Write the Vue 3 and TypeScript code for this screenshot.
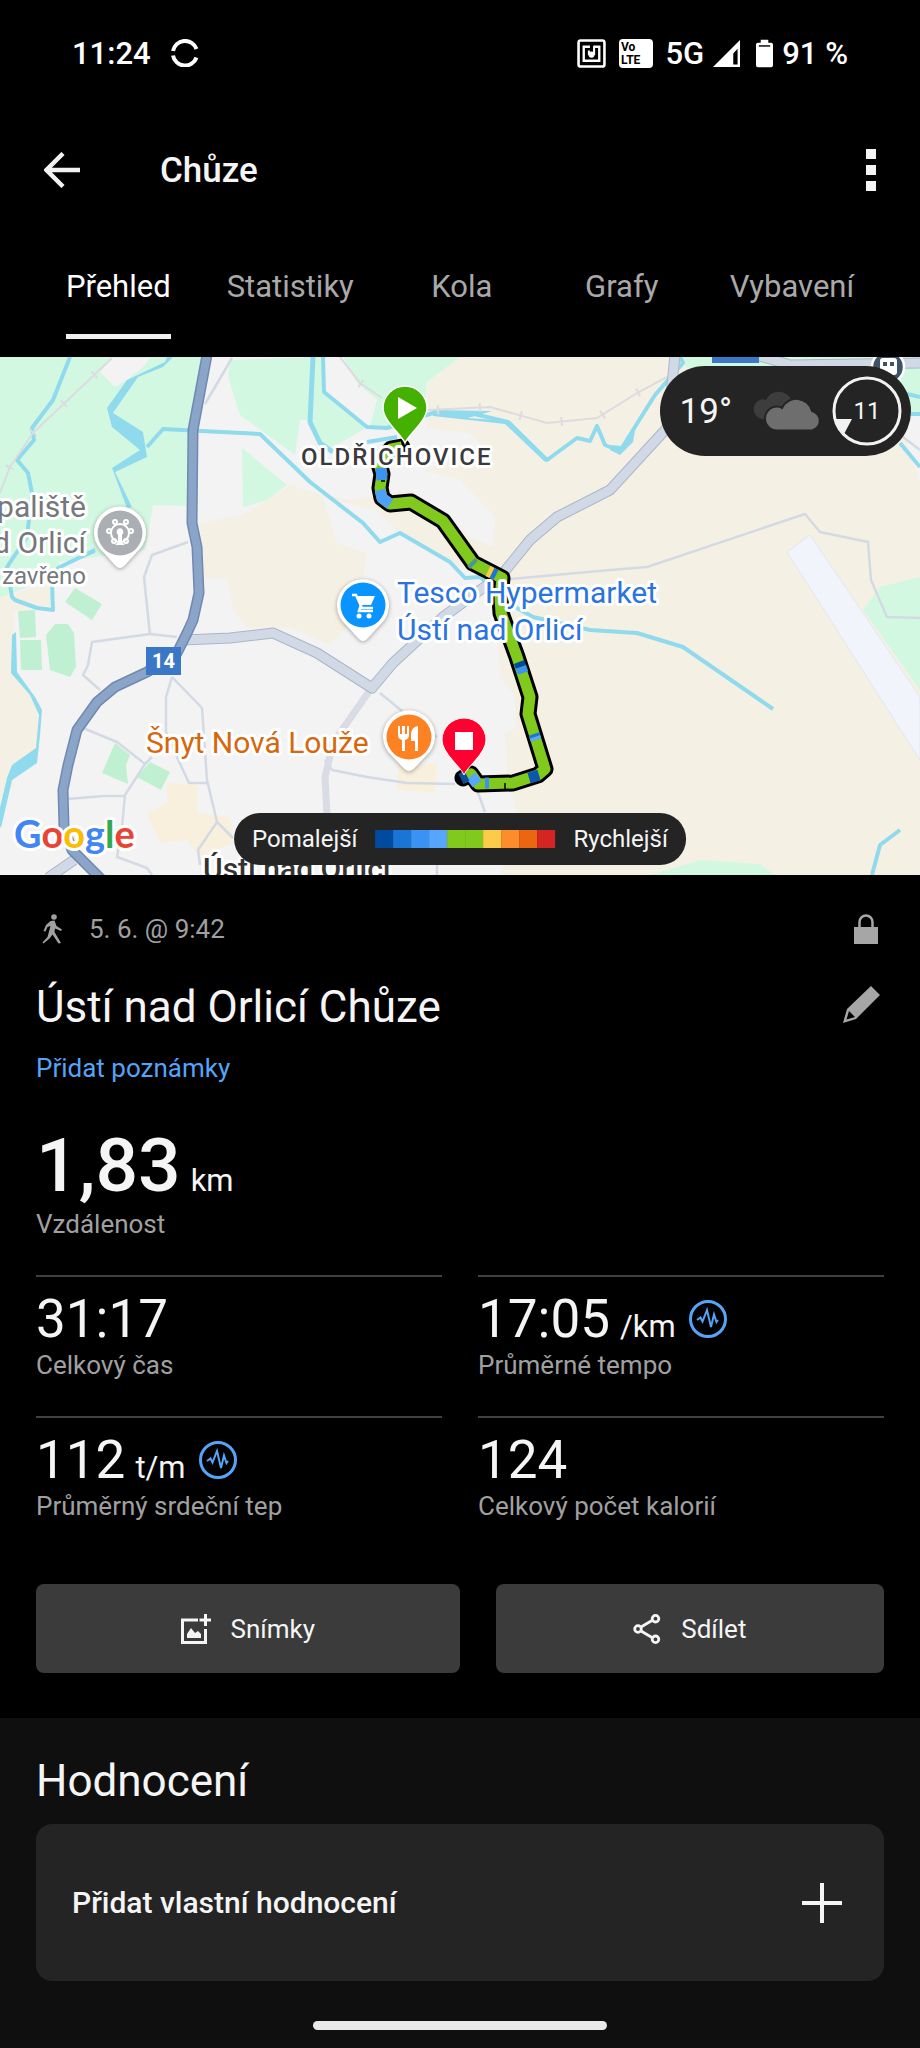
<script setup lang="ts">
import { ref } from 'vue'

interface Metric {
  value: string
  unit?: string
  label: string
  pulse?: boolean
}

interface Segment {
  points: string
  color: string
}

const tabs: string[] = ['Přehled', 'Statistiky', 'Kola', 'Grafy', 'Vybavení']
const activeTab = ref<string>('Přehled')

const metrics: Metric[] = [
  { value: '31:17', label: 'Celkový čas' },
  { value: '17:05', unit: '/km', label: 'Průměrné tempo', pulse: true },
  { value: '112', unit: 't/m', label: 'Průměrný srdeční tep', pulse: true },
  { value: '124', label: 'Celkový počet kalorií' },
]

const paceColors: string[] = [
  '#004a9f', '#1b75d6', '#3a92f2', '#56a6ff', '#82c91e',
  '#82c91e', '#fccb4a', '#fd8c2a', '#ea6610', '#d42424',
]

const track =
  '402,447 391,449 379,464 382,474 380,488 382,498 390,504 411,502 443,521 473,563 502,578 500,597 501,613 517,657 530,697 528,714 545,769 538,775 513,783 478,784 471,774 463,778'

const segments: Segment[] = [
  { points: '381,468 382,480', color: '#3a92f2' },
  { points: '380,490 382,498 390,504', color: '#4d9ff8' },
  { points: '471,562 474,565', color: '#4a9a8c' },
  { points: '488,571 492,573', color: '#fccb4a' },
  { points: '492,573 496,575', color: '#1b75d6' },
  { points: '519,662 521,667', color: '#004a9f' },
  { points: '521,667 523,673', color: '#3a92f2' },
  { points: '534,734 535,737', color: '#1b75d6' },
  { points: '535,737 536,740', color: '#56a6ff' },
  { points: '539,775 529,778', color: '#0d56ad' },
  { points: '489,783 485,783', color: '#3a92f2' },
  { points: '477,784 471,776', color: '#56a6ff' },
  { points: '467,776 461,779', color: '#0b4d97' },
]
</script>

<template>
  <div class="screen">
    <header class="status">
      <div class="status-group">
        <span>11:24</span>
        <svg class="sync" viewBox="0 0 28 28" aria-hidden="true">
          <path d="M2 12a12.2 12.2 0 0 1 23.5-2M2 16.500a12.200 12.200 0 0 0 23.500 2" fill="none" stroke="#fff" stroke-width="4" />
        </svg>
      </div>
      <div class="status-group right">
        <svg class="nfc" viewBox="0 0 28 28" aria-hidden="true">
          <rect x="1.500" y="1.500" width="25" height="25" rx="2" fill="none" stroke="#fff" stroke-width="2.500" />
          <path d="M12.500 7.500H6.500V21H21.500V7.500H16.500" fill="none" stroke="#fff" stroke-width="2.300" />
          <path d="M16.500 6.500V15.500M11.500 11V15.500" fill="none" stroke="#fff" stroke-width="2" />
          <circle cx="14" cy="15" r="3" fill="#fff" />
        </svg>
        <svg class="volte" viewBox="0 0 34 29" aria-hidden="true">
          <rect width="34" height="29" rx="4" fill="#fff" />
          <text x="2" y="12" font-size="12" font-weight="700" fill="#000">Vo</text>
          <text x="2" y="25" font-size="12" font-weight="700" fill="#000">LTE</text>
        </svg>
        <span class="net">5G</span>
        <svg class="signal" viewBox="0 0 28 28" aria-hidden="true">
          <path d="M28 0V28H0ZM25.500 9L21 14V25.500H25.500Z" fill="#fff" fill-rule="evenodd" />
        </svg>
        <svg class="battery" viewBox="0 0 18 29" aria-hidden="true">
          <path d="M5 0h8v3h3q2 0 2 2v22q0 2-2 2H2q-2 0-2-2V5q0-2 2-2h3z" fill="#fff" />
          <path d="M3 6.500h12" stroke="#000" stroke-width="1.500" />
        </svg>
        <span>91 %</span>
      </div>
    </header>

    <div class="appbar">
      <button class="icon-btn" type="button" aria-label="Zpět">
        <svg class="back" viewBox="0 0 36 36" aria-hidden="true">
          <path d="M36 18H3M19 1.500L2.500 18L19 34.500" fill="none" stroke="#f2f2f2" stroke-width="4.500" />
        </svg>
      </button>
      <h1>Chůze</h1>
      <button class="icon-btn kebab" type="button" aria-label="Další možnosti">
        <i /><i /><i />
      </button>
    </div>

    <nav class="tabs">
      <button
        v-for="tab in tabs"
        :key="tab"
        type="button"
        :class="{ active: tab === activeTab }"
        @click="activeTab = tab"
      >
        <span>{{ tab }}</span>
      </button>
    </nav>

    <section class="map">
      <svg class="canvas" viewBox="0 357 920 518" role="img" aria-label="Mapa trasy">
        <rect y="357" width="920" height="518" fill="#f3f3f3" />

        <g fill="#f5f0e4">
          <path d="M460 357H920V875H500L517 815L507 770L505 733L517 727L513 693L500 677L497 630V590L455 575L400 548L380 545L337 543L323 497L390 470L427 430V382Z" />
          <path d="M200 523L243 515L267 500L290 485L323 495L337 543L367 553L367 605L330 645L290 628H248L233 610L227 578H204Z" />
          <path d="M0 598L50 583L52 605L14 611V673L33 697L40 723L35 757L12 773L15 785L0 800Z" />
        </g>
        <g fill="#f3f3f3">
          <path d="M390 427H417L470 433L483 447L470 455L423 470L460 480L495 517L493 547L470 537L440 510L410 490L350 500L325 495L300 455L375 440Z" />
          <path d="M323 497L375 510L400 533L455 565L497 585L497 640L360 600L367 553L337 543Z" />
          <path d="M903 430L912 417L920 414V483Z" />
        </g>
        <g fill="#d3f8e2">
          <path d="M0 357H205L192 425L189 506L153 505L145 550L60 562L50 580L25 588L0 598Z" />
          <path d="M230 360L325 357V392L368 427L333 447L320 445L308 420L300 420L295 455L240 415L228 377Z" />
          <path d="M343 357H460L427 382L425 405L390 430L370 425L377 400L357 383Z" />
          <path d="M242 448L287 485L267 500L243 507Z" />
          <path d="M680 357H920V414L860 400L760 372H690Z" />
          <path d="M863 610L880 587L920 577V690Z" />
          <path d="M650 875L700 860L760 864L775 875Z" />
        </g>
        <path d="M100 372L112 358H150L143 367L130 378L115 387Z" fill="#f3f3f3" />
        <path d="M323 357H343L357 383L377 400L370 425L352 412L324 392Z" fill="#f3f3f3" />
        <g fill="#bff0d2">
          <path d="M75 588L102 604L92 620L65 602Z" />
          <path d="M18 611L35 610L36 637L20 638Z" />
          <path d="M20 640H41L42 670H21Z" />
          <path d="M55 624H68L74 633L76 667L70 677L50 670L46 635Z" />
          <path d="M115 743L130 755L126 765L128 784L102 773Z" />
          <path d="M150 762L170 772L161 790L137 777Z" />
        </g>
        <g fill="#f8f0dc">
          <path d="M167 783L197 785V813L230 817L233 843L200 857L187 840L160 843L147 813L167 803Z" />
          <path d="M398 767L437 763L435 793L397 790Z" />
        </g>
        <path d="M787 552L810 535L920 697V760Z" fill="#f2f4fc" stroke="#e4e6ee" />

        <!-- water -->
        <g fill="none" stroke="#90daee" stroke-width="4" stroke-linejoin="round">
          <path d="M70 357L53 400L32 428L34 440L17 460L28 473L32 493L27 537L7 567L12 597L15 600L37 608L53 610L52 583L58 568L95 550" />
          <path d="M147 447L163 429L260 434L310 482L363 523L380 542L400 533L450 562L465 578L480 577L517 608L533 617L590 630L637 633L683 647L773 709" />
          <path d="M313 357L310 422L320 443L333 452" stroke-width="5" />
          <path d="M323 357L324 392L367 427L387 428L433 413H470L508 422L547 460L577 438L590 441L597 426L605 445L620 451L633 430L655 395L683 363L680 357" />
          <path d="M367 442L397 437" />
          <path d="M903 393L920 397M905 414H920M900 443L920 467" />
          <path d="M872 875L880 845L900 830" />
        </g>
        <g fill="#90daee">
          <path d="M173 357L163 367L138 377L113 413L143 432L147 457L115 472L132 507L127 508L112 468L140 450L112 427L107 408L127 380L165 362L167 357Z" />
          <path d="M12 635L16 632L17 672L35 697L42 710L40 735L37 763L12 780L1 828L-3 820L7 778L12 765L36 748L39 715L30 695L11 673Z" />
          <path d="M433 410L492 411L468 418L510 421L545 456V462L505 424L433 416Z" />
          <path d="M610 445L622 446L636 425L633 442L620 455L610 450Z" />
          <path d="M58 568L95 548V553L70 563Z" />
        </g>

        <!-- railway -->
        <g fill="none" stroke="#dcdce0">
          <g stroke-width="2">
            <path d="M112 358L33 433L10 467L0 493" />
            <path d="M340 357L360 383L382 398" />
            <path d="M428 410L490 407L547 423L597 418L637 393L667 377" />
          </g>
          <g stroke-width="9" stroke-dasharray="2 40">
            <path d="M95 374L33 433L10 467L0 493" />
            <path d="M360 383L382 398" />
            <path d="M437 410L490 407L547 423L597 418L637 393L667 377" />
          </g>
        </g>

        <!-- minor roads -->
        <g fill="none" stroke="#d3dae4" stroke-width="2.500" stroke-linejoin="round">
          <path d="M232 358L205 404" />
          <path d="M188 542L152 555L144 577L150 635" />
          <path d="M177 637L150 634L92 642L88 665L83 675L100 690" />
          <path d="M172 677L166 697V732L177 757L189 783H207" />
          <path d="M172 677L202 708L207 780L217 822L233 838M217 822L198 850L200 865" />
          <path d="M83 728L117 742L145 764L152 757M145 764L125 795L122 827L117 857L147 868L152 875" />
          <path d="M68 799L103 796H125" />
          <path d="M380 693L413 720L437 737" />
          <path d="M325 760L332 770L367 777L407 783L455 784M477 790L485 812M437 864V875" />
          <path d="M500 580L610 570L647 567L805 514L820 532L868 542L871 580L887 617L920 618" />
          <path d="M903 437L920 450" />
        </g>
        <path d="M370 690L333 743L325 777L327 815" fill="none" stroke="#d9dce5" stroke-width="7" />

        <!-- main roads -->
        <g fill="none" stroke-linejoin="round">
          <g stroke="#aab7c7" stroke-width="11">
            <path d="M675 355L672 385L667 428L610 490L557 517L530 540L500 577L480 590L443 617L393 663L372 688L317 653L273 633L230 638L183 640" />
            <path d="M760 356L790 365L920 363M74 860L48 878" />
          </g>
          <g stroke="#d0d9e5" stroke-width="9">
            <path d="M675 355L672 385L667 428L610 490L557 517L530 540L500 577L480 590L443 617L393 663L372 688L317 653L273 633L230 638L183 640" />
            <path d="M760 356L790 365L920 363M74 860L48 878" />
          </g>
          <path d="M207 355L193 430L192 523L197 547L199 593L193 620L187 633L177 653L147 672L115 687L97 702L77 730L68 765L63 790L64 827L72 850L102 880" stroke="#7189b0" stroke-width="11" />
          <path d="M207 355L193 430L192 523L197 547L199 593L193 620L187 633L177 653L147 672L115 687L97 702L77 730L68 765L63 790L64 827L72 850L102 880" stroke="#8aa5c8" stroke-width="8" />
        </g>

        <rect x="712" y="355" width="47" height="8" fill="#3a77c6" />
        <rect x="146" y="647" width="35" height="28" fill="#3a77c6" />
        <text x="163.500" y="668" class="shield">14</text>
        <circle cx="888" cy="367" r="16" fill="#3f5266" stroke="#fff" stroke-width="2.500" />
        <path d="M883 358h11q3 0 3 3v11q0 3-3 3h-11q-3 0-3-3v-11q0-3 3-3zM883 362v4h4v-4zM890 362v4h4v-4z" fill="#fff" fill-rule="evenodd" />

        <!-- recorded track -->
        <g fill="none" stroke-linejoin="round">
          <polyline :points="track" stroke="#000" stroke-width="17" stroke-linecap="round" />
          <polyline :points="track" stroke="#82c91e" stroke-width="11" />
          <polyline v-for="s in segments" :key="s.points" :points="s.points" :stroke="s.color" stroke-width="11" />
          <path d="M505 783v6M381 481h4" stroke="#000" stroke-width="1.500" />
        </g>

        <!-- labels -->
        <g class="label">
          <text x="301" y="465" class="village">OLDŘICHOVICE</text>
          <g class="poi shop">
            <text x="397" y="603">Tesco Hypermarket</text>
            <text x="397" y="640">Ústí nad Orlicí</text>
          </g>
          <text x="146" y="753" class="poi food">Šnyt Nová Louže</text>
          <g class="poi pool" text-anchor="end">
            <text x="86" y="517">paliště</text>
            <text x="86" y="553">d Orlicí</text>
            <text x="86" y="584" class="small">zavřeno</text>
          </g>
          <text x="203" y="879" class="city">Ústí nad Orlicí</text>
          <text x="14" y="848" class="google"><tspan fill="#4285f4">G</tspan><tspan fill="#ea4335">o</tspan><tspan fill="#fbbc05">o</tspan><tspan fill="#4285f4">g</tspan><tspan fill="#34a853">l</tspan><tspan fill="#ea4335">e</tspan></text>
        </g>

        <!-- place pins -->
        <g class="pin">
          <path d="M120 568C116 568 113 562 104 553A26 26 0 1 1 136 553C127 562 124 568 120 568Z" fill="#fff" />
          <circle cx="120" cy="533" r="22.500" fill="#abafb4" />
          <g fill="none" stroke="#fff" stroke-width="2">
            <circle cx="120" cy="533" r="9" />
            <circle cx="115" cy="522" r="2" /><circle cx="126" cy="522" r="2" />
            <circle cx="109" cy="531" r="2" /><circle cx="131" cy="531" r="2" />
            <circle cx="114" cy="541" r="2" /><circle cx="126" cy="541" r="2" />
          </g>
          <path d="M120 528a4 4 0 0 1 2 7v7l3 3h-10l3-3v-7a4 4 0 0 1 2-7z" fill="#fff" />
        </g>
        <g class="pin">
          <path d="M363 641C359 641 356 635 346 625A26 26 0 1 1 380 625C370 635 367 641 363 641Z" fill="#fff" />
          <circle cx="363" cy="605" r="22.500" fill="#0a94ff" />
          <path d="M352 595h4l6 13h11" fill="none" stroke="#fff" stroke-width="2.500" />
          <path d="M356 596h19l-4 9h-11z" fill="#fff" />
          <path d="M361 605l-2 6h14" fill="none" stroke="#fff" stroke-width="2.500" />
          <circle cx="359" cy="616" r="2.500" fill="#fff" /><circle cx="369" cy="616" r="2.500" fill="#fff" />
        </g>
        <g class="pin">
          <path d="M409 771C405 771 402 766 392 756A26 26 0 1 1 426 756C416 766 413 771 409 771Z" fill="#fff" />
          <circle cx="409" cy="737" r="22.500" fill="#fd8223" />
          <path d="M398 726h2v8h2v-8h3v8h2v-8h2v9q0 4-4 5v11h-3v-11q-4-1-4-5zM418 726v25h-3v-10h-4v-8q1-6 7-7z" fill="#fff" />
        </g>

        <!-- start and finish -->
        <path d="M405 443C402 435 383 421 383 408A22 22 0 1 1 427 408C427 421 408 435 405 443Z" fill="#45b000" stroke="#fff" stroke-width="1.500" />
        <path d="M398 397L417 408L398 419Z" fill="#fff" />
        <path d="M464 775C461 767 442 753 442 740A22 22 0 1 1 486 740C486 753 467 767 464 775Z" fill="#ff0030" stroke="#fff" stroke-width="1" />
        <rect x="455" y="732" width="18" height="18" fill="#fff" />
      </svg>

      <div class="weather">
        <span class="temp">19°</span>
        <svg class="clouds" viewBox="0 0 70 40" aria-hidden="true">
          <path d="M10 28a10 10 0 0 1-1-19.500q3-.5 5 .5A14 14 0 0 1 40 10V28Z" fill="#3d3d3d" />
          <path d="M25 39.500a12 12 0 0 1 0-24q3 0 5 1.500A16 16 0 0 1 60 20A10 10 0 0 1 60 39.500Z" fill="#6e6e6e" stroke="#242424" stroke-width="2" />
        </svg>
        <div class="wind">
          <svg viewBox="0 0 70 70" aria-hidden="true">
            <circle cx="35" cy="35" r="33" fill="none" stroke="#f2f2f2" stroke-width="3" />
            <path d="M3 43H20L12 58Q5 52 3 43Z" fill="#f2f2f2" />
          </svg>
          <span>11</span>
        </div>
      </div>

      <div class="legend">
        <span>Pomalejší</span>
        <div class="scale">
          <i v-for="(color, i) in paceColors" :key="i" :style="{ background: color }" />
        </div>
        <span>Rychlejší</span>
      </div>
    </section>

    <main class="details">
      <div class="row meta">
        <svg class="walker" viewBox="0 0 20 30" aria-hidden="true">
          <circle cx="11.500" cy="3" r="2.800" fill="#a0a0a0" />
          <path d="M8 7L12 6.500L14 12L19.500 15.500L18.500 17L12.500 14.500L12 18L18.500 29L16 29.500L10 20.500L7 24.500L1 29.500L0 28.500L5 23L8 12L5 13L3 17.500L1 17L3.500 11Z" fill="#a0a0a0" />
        </svg>
        <time>5. 6. @ 9:42</time>
        <svg class="lock" viewBox="0 0 24 30" aria-hidden="true">
          <path d="M0 13H24V30H0Z" fill="#a6a6a6" />
          <path d="M5.500 13V8a6.500 6.500 0 0 1 13 0V13" fill="none" stroke="#a6a6a6" stroke-width="2.500" />
        </svg>
      </div>
      <div class="row title">
        <h2>Ústí nad Orlicí Chůze</h2>
        <button class="icon-btn" type="button" aria-label="Upravit název">
          <svg class="pencil" viewBox="0 0 37 37" aria-hidden="true">
            <path d="M28 0L37 9L13 33L0 37L4 23ZM6 25L3.500 33.500L12 31Z" fill="#a6a6a6" fill-rule="evenodd" />
          </svg>
        </button>
      </div>
      <a class="note" href="#poznamky">Přidat poznámky</a>

      <div class="distance">
        <p class="big"><strong>1,83</strong><span class="unit">km</span></p>
        <p class="caption">Vzdálenost</p>
      </div>

      <div class="metrics">
        <div v-for="m in metrics" :key="m.label" class="metric">
          <p class="value">
            <span>{{ m.value }}</span>
            <span v-if="m.unit" class="unit">{{ m.unit }}</span>
            <svg v-if="m.pulse" class="pulse" viewBox="0 0 38 38" aria-hidden="true">
              <circle cx="19" cy="19" r="17.500" />
              <path d="M8 20L11.500 17.500L13.500 21.500L18 10L22 27L25 14.500L27.500 22L29 20" />
            </svg>
          </p>
          <p class="caption">{{ m.label }}</p>
        </div>
      </div>

      <div class="actions">
        <button type="button">
          <svg class="photo" viewBox="0 0 30 30" aria-hidden="true">
            <path d="M17 6H1.500V28.500H24.500V15" fill="none" stroke="#f5f5f5" stroke-width="3" />
            <path d="M24.500 0V12M18.500 6H30" fill="none" stroke="#f5f5f5" stroke-width="3" />
            <path d="M6 24V20L10 14L14 19L17 17L20 20V24Z" fill="#f5f5f5" />
          </svg>
          <span>Snímky</span>
        </button>
        <button type="button">
          <svg class="share" viewBox="0 0 28 30" aria-hidden="true">
            <g fill="none" stroke="#f5f5f5" stroke-width="2.800">
              <path d="M8 13L19 6.500M8 17L19 23.500" />
              <circle cx="5" cy="15" r="3.300" /><circle cx="22.500" cy="4.700" r="3.300" /><circle cx="22.500" cy="25.300" r="3.300" />
            </g>
          </svg>
          <span>Sdílet</span>
        </button>
      </div>
    </main>

    <section class="review">
      <h2>Hodnocení</h2>
      <button class="card" type="button">
        <span>Přidat vlastní hodnocení</span>
        <svg class="plus" viewBox="0 0 40 40" aria-hidden="true">
          <path d="M20 0V40M0 20H40" stroke="#f5f5f5" stroke-width="4" />
        </svg>
      </button>
      <div class="home-bar" />
    </section>
  </div>
</template>

<style>
body {
  margin: 0;
  background: #0f0f0f;
}
</style>

<style scoped>
.screen {
  font-family: Roboto, "Liberation Sans", sans-serif;
  color: #f5f5f5;
  background: #000;
}
h1, h2, p {
  margin: 0;
  font-weight: 400;
}
button {
  margin: 0;
  padding: 0;
  border: 0;
  background: none;
  color: inherit;
  font: inherit;
  cursor: pointer;
}
svg {
  display: block;
  flex: none;
}
.status {
  display: flex;
  justify-content: space-between;
  align-items: center;
  height: 106px;
  padding: 0 72px;
  font-size: 31px;
  font-weight: 500;
  color: #fff;
}
.status-group {
  display: flex;
  align-items: center;
}
.sync { width: 28px; height: 28px; margin-left: 20px; }
.nfc { width: 29px; height: 29px; }
.volte { width: 34px; height: 29px; margin-left: 13px; }
.net { margin-left: 12px; }
.signal { width: 27px; height: 27px; margin: 0 16px 0 9px; }
.battery { width: 17px; height: 29px; margin-right: 9px; }

.appbar {
  display: flex;
  align-items: center;
  height: 128px;
  padding: 0 44px;
}
.icon-btn { flex: none; }
.back { width: 36px; height: 36px; }
.appbar h1 {
  flex: 1;
  margin-left: 80px;
  font-size: 35px;
  font-weight: 500;
}
.kebab {
  display: grid;
  gap: 6px;
}
.kebab i {
  width: 10px;
  height: 10px;
  background: #f5f5f5;
}

.tabs {
  display: flex;
  justify-content: center;
  padding-bottom: 18px;
}
.tabs button {
  min-width: 160px;
  padding: 0 28px;
  font-size: 31px;
  line-height: 105px;
  color: #a9a9a9;
}
.tabs span { display: inline-block; }
.tabs .active { color: #fff; }
.tabs .active span { box-shadow: inset 0 -5px #f0f0f0; }

.map {
  position: relative;
  overflow: hidden;
}
.canvas {
  width: 100%;
  height: auto;
}
.label text {
  stroke: #fff;
  stroke-width: 6px;
  stroke-linejoin: round;
  paint-order: stroke;
}
.village {
  font-size: 24px;
  font-weight: 500;
  letter-spacing: 2px;
  fill: #3a3a3e;
}
.poi { font-size: 30px; }
.shop { fill: #2a74e0; }
.food { fill: #d5670e; }
.pool { fill: #75787c; }
.small { font-size: 24px; }
.city { font-size: 30px; font-weight: 500; fill: #333; }
.google { font-family: Lato, sans-serif; font-size: 38px; font-weight: 700; }
.shield {
  font-size: 20px;
  font-weight: 700;
  text-anchor: middle;
  fill: #fff;
}
.pin { filter: drop-shadow(0 1px 2px rgba(0, 0, 0, 0.35)); }

.weather {
  position: absolute;
  top: 9px;
  right: 9px;
  display: flex;
  align-items: center;
  box-sizing: border-box;
  height: 90px;
  padding: 0 9px 0 20px;
  border-radius: 45px;
  background: #242424;
}
.temp { font-size: 35px; }
.clouds { width: 70px; height: 40px; margin: 0 10px 0 20px; }
.wind {
  display: grid;
  place-items: center;
  width: 70px;
  height: 70px;
  font-size: 24px;
}
.wind > * { grid-area: 1 / 1; }

.legend {
  position: absolute;
  left: 50%;
  bottom: 10px;
  transform: translateX(-50%);
  display: flex;
  align-items: center;
  gap: 18px;
  height: 52px;
  padding: 0 18px;
  border-radius: 26px;
  background: #242424;
  font-size: 24px;
}
.scale { display: flex; }
.scale i {
  width: 18px;
  height: 18px;
}

.details { padding: 27px 36px 45px; }
.row {
  display: flex;
  align-items: center;
  justify-content: space-between;
}
.meta { height: 54px; padding: 0 6px; }
.walker { width: 21px; height: 30px; }
.meta time {
  flex: 1;
  margin-left: 26px;
  font-size: 26px;
  color: #a0a0a0;
}
.lock { width: 24px; height: 30px; }
.title { margin-top: 24px; padding-right: 4px; }
.title h2, .review h2 {
  font-size: 44px;
  line-height: 54px;
}
.title .icon-btn { align-self: flex-start; padding-top: 6px; }
.pencil { width: 37px; height: 37px; }
.note {
  display: block;
  width: fit-content;
  margin-top: 16px;
  font-size: 26px;
  line-height: 36px;
  color: #54a5f8;
  text-decoration: none;
}
.distance { margin: 40px 0 33px; }
.big {
  display: flex;
  align-items: baseline;
  height: 80px;
  line-height: 78px;
}
.big strong {
  font-size: 75px;
  font-weight: 500;
}
.unit {
  margin-left: 10px;
  font-size: 31px;
}
.caption {
  font-size: 26px;
  line-height: 36px;
  color: #a0a0a0;
}
.metrics {
  display: grid;
  grid-template-columns: 1fr 1fr;
  column-gap: 36px;
}
.metric {
  padding: 14px 0 33px;
  border-top: 2px solid #404040;
}
.value {
  display: flex;
  align-items: baseline;
  height: 56px;
  font-size: 53px;
  line-height: 56px;
}
.pulse {
  align-self: center;
  width: 38px;
  height: 38px;
  margin-left: 13px;
  fill: none;
  stroke: #54a5f8;
  stroke-width: 3px;
}
.pulse path { stroke-width: 2px; }
.actions {
  display: grid;
  grid-template-columns: 12fr 11fr;
  gap: 36px;
  margin-top: 27px;
}
.actions button {
  display: flex;
  align-items: center;
  justify-content: center;
  gap: 20px;
  height: 89px;
  border-radius: 8px;
  background: #3b3b3b;
  font-size: 26px;
}
.photo { width: 30px; height: 30px; }
.share { width: 28px; height: 30px; }

.review {
  padding: 36px 36px 18px;
  background: #0f0f0f;
}
.card {
  display: flex;
  align-items: center;
  justify-content: space-between;
  width: 100%;
  height: 157px;
  margin-top: 16px;
  padding: 0 42px 0 36px;
  border-radius: 16px;
  background: #242424;
  font-size: 30px;
  font-weight: 500;
}
.plus { width: 40px; height: 40px; }
.home-bar {
  width: 294px;
  height: 9px;
  margin: 40px auto 0;
  border-radius: 5px;
  background: #eaeaea;
}
</style>
